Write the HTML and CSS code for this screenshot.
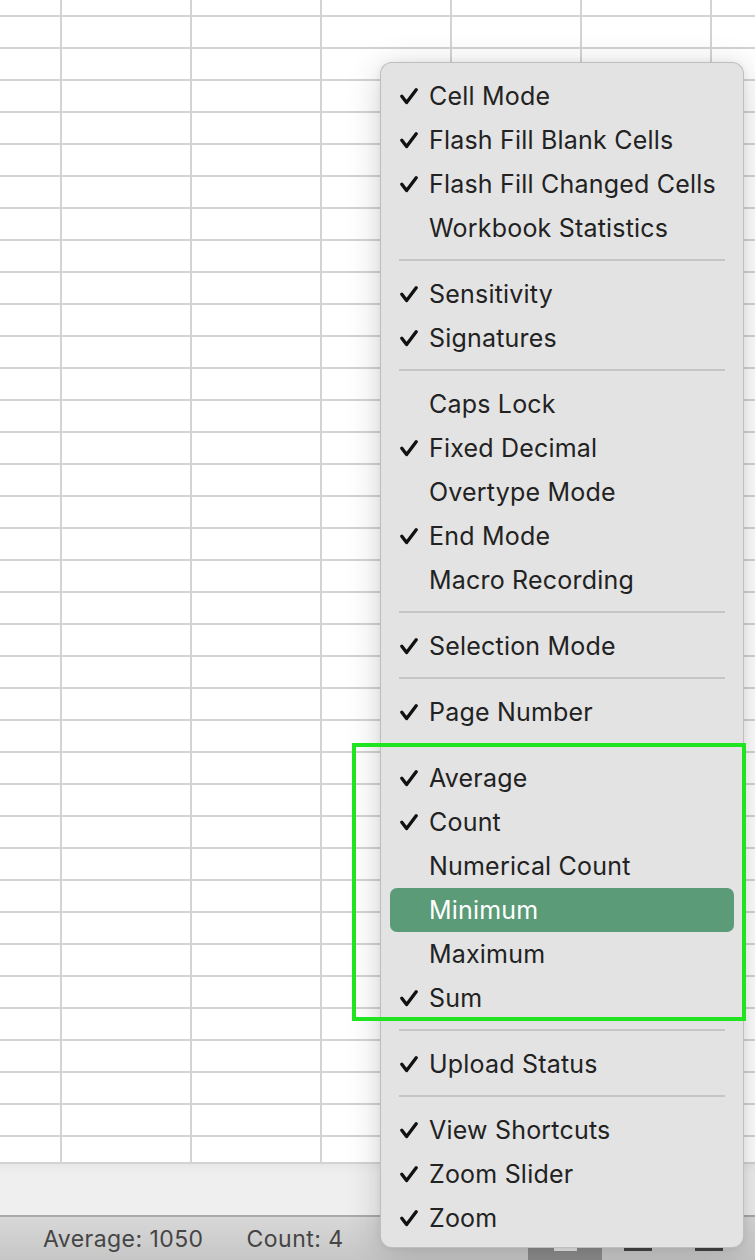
FILE: index.html
```html
<!DOCTYPE html>
<html lang="en">
<head>
<meta charset="utf-8">
<title>Status bar menu</title>
<link rel="stylesheet" href="styles.css">
</head>
<body>
<div class="window">
  <div class="sheet"></div>
  <div class="hscroll"></div>
  <div class="statusbar">
    <span class="stat">Average: 1050</span>
    <span class="stat">Count: 4</span>
    <div class="views">
      <div class="view active"><span class="glyph light"></span></div>
      <div class="view"><span class="glyph dark"></span></div>
      <div class="view"><span class="glyph dark"></span></div>
    </div>
  </div>

  <ul class="menu">
    <li class="item"><svg class="check" viewBox="0 0 18 17"><path d="M1.8 8.2 L6.6 14.6 L16.2 1.8"/></svg><span>Cell Mode</span></li>
    <li class="item"><svg class="check" viewBox="0 0 18 17"><path d="M1.8 8.2 L6.6 14.6 L16.2 1.8"/></svg><span>Flash Fill Blank Cells</span></li>
    <li class="item"><svg class="check" viewBox="0 0 18 17"><path d="M1.8 8.2 L6.6 14.6 L16.2 1.8"/></svg><span>Flash Fill Changed Cells</span></li>
    <li class="item"><span class="nocheck"></span><span>Workbook Statistics</span></li>
    <li class="sep"></li>
    <li class="item"><svg class="check" viewBox="0 0 18 17"><path d="M1.8 8.2 L6.6 14.6 L16.2 1.8"/></svg><span>Sensitivity</span></li>
    <li class="item"><svg class="check" viewBox="0 0 18 17"><path d="M1.8 8.2 L6.6 14.6 L16.2 1.8"/></svg><span>Signatures</span></li>
    <li class="sep"></li>
    <li class="item"><span class="nocheck"></span><span>Caps Lock</span></li>
    <li class="item"><svg class="check" viewBox="0 0 18 17"><path d="M1.8 8.2 L6.6 14.6 L16.2 1.8"/></svg><span>Fixed Decimal</span></li>
    <li class="item"><span class="nocheck"></span><span>Overtype Mode</span></li>
    <li class="item"><svg class="check" viewBox="0 0 18 17"><path d="M1.8 8.2 L6.6 14.6 L16.2 1.8"/></svg><span>End Mode</span></li>
    <li class="item"><span class="nocheck"></span><span>Macro Recording</span></li>
    <li class="sep"></li>
    <li class="item"><svg class="check" viewBox="0 0 18 17"><path d="M1.8 8.2 L6.6 14.6 L16.2 1.8"/></svg><span>Selection Mode</span></li>
    <li class="sep"></li>
    <li class="item"><svg class="check" viewBox="0 0 18 17"><path d="M1.8 8.2 L6.6 14.6 L16.2 1.8"/></svg><span>Page Number</span></li>
    <li class="sep"></li>
    <li class="item"><svg class="check" viewBox="0 0 18 17"><path d="M1.8 8.2 L6.6 14.6 L16.2 1.8"/></svg><span>Average</span></li>
    <li class="item"><svg class="check" viewBox="0 0 18 17"><path d="M1.8 8.2 L6.6 14.6 L16.2 1.8"/></svg><span>Count</span></li>
    <li class="item"><span class="nocheck"></span><span>Numerical Count</span></li>
    <li class="item selected"><span class="nocheck"></span><span>Minimum</span></li>
    <li class="item"><span class="nocheck"></span><span>Maximum</span></li>
    <li class="item"><svg class="check" viewBox="0 0 18 17"><path d="M1.8 8.2 L6.6 14.6 L16.2 1.8"/></svg><span>Sum</span></li>
    <li class="sep"></li>
    <li class="item"><svg class="check" viewBox="0 0 18 17"><path d="M1.8 8.2 L6.6 14.6 L16.2 1.8"/></svg><span>Upload Status</span></li>
    <li class="sep"></li>
    <li class="item"><svg class="check" viewBox="0 0 18 17"><path d="M1.8 8.2 L6.6 14.6 L16.2 1.8"/></svg><span>View Shortcuts</span></li>
    <li class="item"><svg class="check" viewBox="0 0 18 17"><path d="M1.8 8.2 L6.6 14.6 L16.2 1.8"/></svg><span>Zoom Slider</span></li>
    <li class="item"><svg class="check" viewBox="0 0 18 17"><path d="M1.8 8.2 L6.6 14.6 L16.2 1.8"/></svg><span>Zoom</span></li>
  </ul>

  <div class="annotation"></div>
</div>
</body>
</html>
```

FILE: styles.css
```css
* { box-sizing: border-box; }

html, body {
  margin: 0;
  padding: 0;
  width: 755px;
  height: 1260px;
  overflow: hidden;
  background: #ffffff;
  font-family: Inter, "Noto Sans", "Liberation Sans", sans-serif;
}

.window {
  position: relative;
  width: 755px;
  height: 1260px;
  display: flex;
  flex-direction: column;
}

.sheet {
  height: 1164px;
  flex: none;
  border-bottom: 2px solid #d3d3d3;
  background-color: #ffffff;
  background-image:
    linear-gradient(to right, #d3d3d3 2px, transparent 2px),
    linear-gradient(to bottom, #d3d3d3 2px, transparent 2px);
  background-size: 130px 100%, 100% 32px;
  background-position: 60px 0, 0 15px;
}

.hscroll {
  flex: none;
  height: 53px;
  background: linear-gradient(#e8e8e8, #efefef 20%, #efefef);
  border-bottom: 2px solid #a9a9a9;
}

.statusbar {
  flex: 1;
  display: flex;
  align-items: flex-start;
  background: linear-gradient(#d8d8d8, #c6c6c6);
  padding-left: 43px;
}

.stat {
  font-size: 23px;
  letter-spacing: 0.45px;
  color: #454545;
  line-height: 24px;
  margin-top: 10px;
  margin-right: 43px;
}

.views {
  margin-left: auto;
  margin-right: 11px;
  display: flex;
  height: 100%;
  align-items: flex-end;
}

.view {
  width: 71px;
  height: 36px;
  display: flex;
  justify-content: center;
  align-items: flex-end;
  padding-bottom: 9px;
}

.view.active {
  width: 74px;
  background: #8c8c8c;
}

.glyph {
  display: block;
  height: 20px;
}

.glyph.light { border-bottom: 3px solid #e8e8e8; width: 23px; }
.glyph.dark { border-bottom: 3px solid #444444; width: 28px; }

.menu {
  position: absolute;
  left: 380px;
  top: 62px;
  width: 364px;
  height: 1186px;
  margin: 0;
  padding: 11px 9px 7px 9px;
  list-style: none;
  background: #e3e3e3;
  border: 1px solid rgba(0, 0, 0, 0.16);
  border-radius: 12px;
  box-shadow: 0 6px 34px rgba(0, 0, 0, 0.18), 0 0 6px rgba(0, 0, 0, 0.06);
}

.item {
  height: 44px;
  display: flex;
  align-items: center;
  padding-left: 10px;
  gap: 11px;
  border-radius: 7px;
  font-size: 25px;
  letter-spacing: 0.2px;
  color: #222222;
  white-space: nowrap;
}

.item.selected {
  background: #5b9b78;
  color: #ffffff;
}

.check, .nocheck {
  flex: none;
  width: 18px;
  height: 17px;
}

.check path {
  fill: none;
  stroke: #111111;
  stroke-width: 3.3;
  stroke-linecap: round;
  stroke-linejoin: round;
}

.sep {
  height: 22px;
  padding: 9px 9px 0 9px;
}

.sep::before {
  content: "";
  display: block;
  height: 2px;
  background: #c5c5c5;
}

.annotation {
  position: absolute;
  left: 352px;
  top: 743px;
  width: 394px;
  height: 278px;
  border: 4px solid #1fe41f;
  pointer-events: none;
}
```
